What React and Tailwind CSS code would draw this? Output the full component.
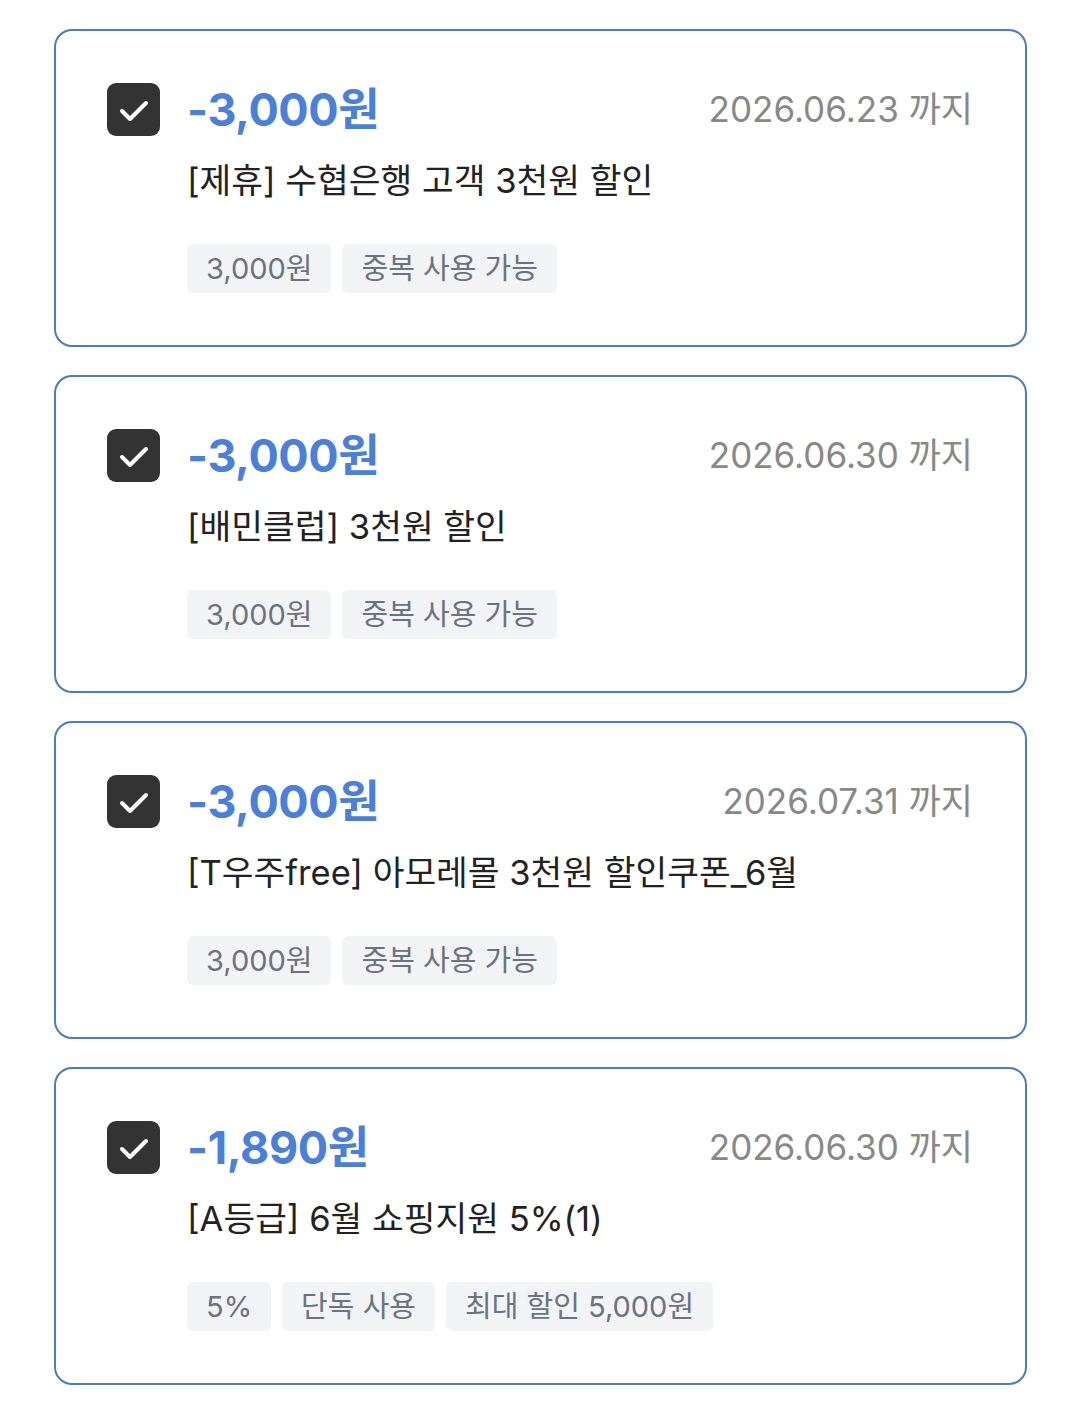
import React from "react";

const coupons = [
  { amount: "-3,000원", date: "2026.06.23 까지", title: "[제휴] 수협은행 고객 3천원 할인", tags: ["3,000원", "중복 사용 가능"] },
  { amount: "-3,000원", date: "2026.06.30 까지", title: "[배민클럽] 3천원 할인", tags: ["3,000원", "중복 사용 가능"] },
  { amount: "-3,000원", date: "2026.07.31 까지", title: "[T우주free] 아모레몰 3천원 할인쿠폰_6월", tags: ["3,000원", "중복 사용 가능"] },
  { amount: "-1,890원", date: "2026.06.30 까지", title: "[A등급] 6월 쇼핑지원 5%(1)", tags: ["5%", "단독 사용", "최대 할인 5,000원"] },
];

function Check() {
  return (
    <div className="w-[53px] h-[53px] shrink-0 rounded-[9px] bg-[#333333] flex items-center justify-center">
      <svg width="32" height="32" viewBox="0 0 32 32" fill="none">
        <path d="M4 17 L12 25 L28 9" stroke="white" strokeWidth="4" strokeLinecap="round" strokeLinejoin="round" />
      </svg>
    </div>
  );
}

export default function App() {
  return (
    <div
      className="w-[1080px] min-h-[1402px] bg-white pt-[29px] pl-[54px] pr-[53px] flex flex-col gap-[28px]"
      style={{ fontFamily: "Inter, 'Noto Sans CJK KR', sans-serif" }}
    >
      {coupons.map((c, i) => (
        <div key={i} className="border-2 border-[#4a7acb] rounded-[18px] pt-[52px] pb-[52px] pl-[51px] pr-[52px] flex gap-[27px]">
          <Check />
          <div className="flex-1 flex flex-col">
            <div className="h-[53px] flex items-center justify-between">
              <span className="text-[45px] font-bold text-[#4a7fda] leading-none tracking-[-0.4px]">{c.amount}</span>
              <span className="text-[35px] text-[#888888] leading-none">{c.date}</span>
            </div>
            <div className="mt-[23px] text-[34.5px] leading-[44px] text-[#222222]">{c.title}</div>
            <div className="mt-[41px] flex gap-[11px]">
              {c.tags.map((t, j) => (
                <span key={j} className="h-[49px] px-[19px] rounded-[6px] bg-[#f3f4f6] text-[#6b7280] text-[29px] leading-[49px]">
                  {t}
                </span>
              ))}
            </div>
          </div>
        </div>
      ))}
    </div>
  );
}
